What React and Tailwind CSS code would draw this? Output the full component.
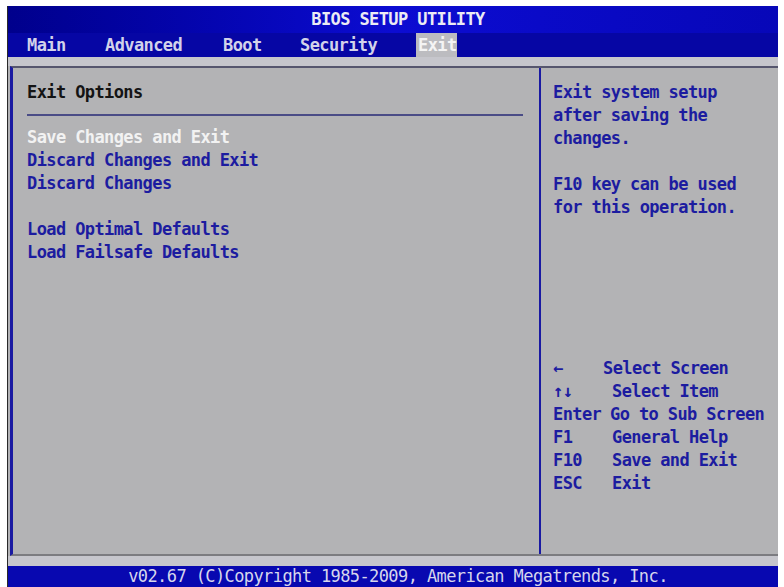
const tabs = [
  { label: "Main", w: "w-[78px]" },
  { label: "Advanced", w: "w-[118px]" },
  { label: "Boot", w: "w-[77px]" },
  { label: "Security", w: "w-[116px]" },
];

const options = [
  { label: "Save Changes and Exit", active: true },
  { label: "Discard Changes and Exit" },
  { label: "Discard Changes" },
  null,
  { label: "Load Optimal Defaults" },
  { label: "Load Failsafe Defaults" },
];

const keys = [
  { key: "\u2190", desc: "Select Screen", pad: "pl-[50px]" },
  { key: "\u2191\u2193", desc: "Select Item", pad: "pl-[59px]" },
  { key: "Enter", desc: "Go to Sub Screen", pad: "pl-[57px]" },
  { key: "F1", desc: "General Help", pad: "pl-[59px]" },
  { key: "F10", desc: "Save and Exit", pad: "pl-[59px]" },
  { key: "ESC", desc: "Exit", pad: "pl-[59px]" },
];

export default function App() {
  return (
    <div className="w-[784px] h-[587px] bg-white pt-[6px] pl-[7px] pr-[6px] font-['DejaVu_Sans_Mono','Liberation_Mono',monospace] font-bold text-[17px] tracking-[-0.6px] leading-[23px]">
      <div className="h-full flex flex-col bg-[#b3b3b5] border-l border-[#2a2a2a]">
        {/* title + menu bar */}
        <header className="h-[51px] flex flex-col">
          <div className="h-[27px] flex items-center justify-center pl-[10px] bg-gradient-to-r from-[#00008c] via-[#0c0cd2] to-[#0707b8] text-[#ececf4]">
            BIOS SETUP UTILITY
          </div>
          <nav className="h-[24px] flex items-center pl-[19px] bg-[#0606a4] text-[#d2d2ea]">
            {tabs.map((t) => (
              <span key={t.label} className={t.w}>
                {t.label}
              </span>
            ))}
            <span className="h-full flex items-center px-[2px] w-[41px] bg-[#bcbcc0] text-[#f4f4f4]">Exit</span>
          </nav>
        </header>

        <div className="h-[9px] bg-[#c6c6cc]" />

        {/* main panel */}
        <main className="h-[490px] ml-[2px] flex border-t-2 border-t-[#56566e] border-b-2 border-b-[#7c7c80] border-l-[3px] border-l-[#1a1aa2]">
          <section className="w-[526px] pt-[13px] pl-[14px] pr-[16px]">
            <div className="text-[#141414]">Exit Options</div>
            <div className="mt-[10px] h-[2px] bg-[#4a4c86]" />
            <ul className="mt-[10px]">
              {options.map((o, i) =>
                o ? (
                  <li key={i} className={o.active ? "text-[#f2f2f2]" : "text-[#1c1ca0]"}>
                    {o.label}
                  </li>
                ) : (
                  <li key={i} className="h-[23px]" />
                )
              )}
            </ul>
          </section>

          <aside className="flex-1 border-l-2 border-[#1a1aa2] pt-[13px] pl-[12px] text-[#1c1ca0]">
            <p>Exit system setup</p>
            <p>after saving the</p>
            <p>changes.</p>
            <p className="mt-[23px]">F10 key can be used</p>
            <p>for this operation.</p>

            <div className="mt-[138px]">
              {keys.map((k) => (
                <div key={k.key} className="relative">
                  <span className="absolute left-0">{k.key}</span>
                  <span className={"block " + k.pad}>{k.desc}</span>
                </div>
              ))}
            </div>
          </aside>
        </main>

        <div className="h-[10px] bg-[#c6c6cc]" />

        <footer className="h-[21px] flex items-center justify-center pl-[10px] bg-[#0808b0] text-[#d6d6ec] font-normal">
          v02.67 (C)Copyright 1985-2009, American Megatrends, Inc.
        </footer>
      </div>
    </div>
  );
}
